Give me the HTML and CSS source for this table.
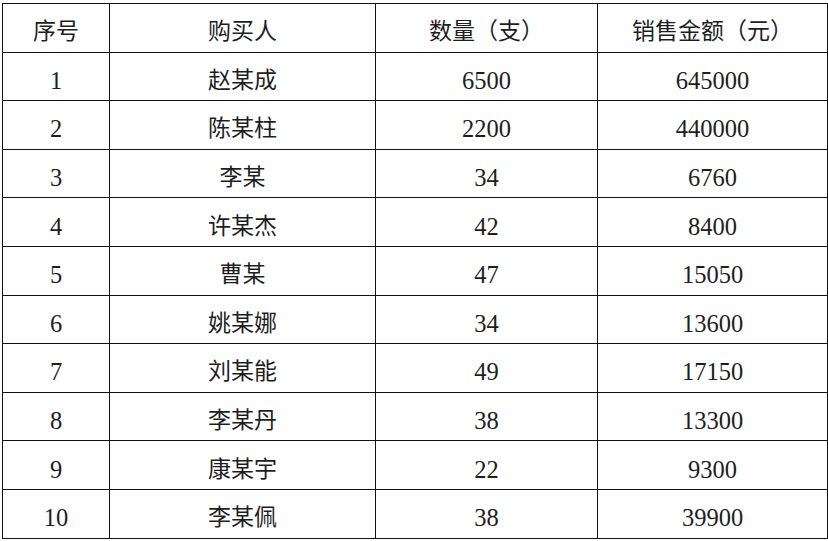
FILE: index.html
```html
<!DOCTYPE html>
<html lang="zh-CN">
<head>
<meta charset="utf-8">
<title>销售表</title>
<link rel="stylesheet" href="styles.css">
</head>
<body>
<table class="sales">
  <colgroup>
    <col class="c1"><col class="c2"><col class="c3"><col class="c4">
  </colgroup>
  <thead>
    <tr><th>序号</th><th>购买人</th><th>数量（支）</th><th>销售金额（元）</th></tr>
  </thead>
  <tbody>
    <tr><td class="num">1</td><td>赵某成</td><td class="num">6500</td><td class="num">645000</td></tr>
    <tr><td class="num">2</td><td>陈某柱</td><td class="num">2200</td><td class="num">440000</td></tr>
    <tr><td class="num">3</td><td>李某</td><td class="num">34</td><td class="num">6760</td></tr>
    <tr><td class="num">4</td><td>许某杰</td><td class="num">42</td><td class="num">8400</td></tr>
    <tr><td class="num">5</td><td>曹某</td><td class="num">47</td><td class="num">15050</td></tr>
    <tr><td class="num">6</td><td>姚某娜</td><td class="num">34</td><td class="num">13600</td></tr>
    <tr><td class="num">7</td><td>刘某能</td><td class="num">49</td><td class="num">17150</td></tr>
    <tr><td class="num">8</td><td>李某丹</td><td class="num">38</td><td class="num">13300</td></tr>
    <tr><td class="num">9</td><td>康某宇</td><td class="num">22</td><td class="num">9300</td></tr>
    <tr><td class="num">10</td><td>李某佩</td><td class="num">38</td><td class="num">39900</td></tr>
  </tbody>
</table>
</body>
</html>
```
FILE: styles.css
```css
html, body {
  margin: 0;
  padding: 0;
  background: #ffffff;
}
body {
  padding: 3px 0 0 2px;
}
.sales {
  border-collapse: collapse;
  table-layout: fixed;
  width: 825px;
  font-family: "Liberation Serif", "Noto Sans CJK SC", serif;
  font-size: 23px;
  color: #1e1e1e;
}
.c1 { width: 107px; }
.c2 { width: 266px; }
.c3 { width: 222px; }
.c4 { width: 230px; }
.sales th,
.sales td {
  border: 1.5px solid #111;
  height: 48.6px;
  box-sizing: border-box;
  padding: 9px 0 0 0;
  text-align: center;
  vertical-align: middle;
  font-weight: normal;
  line-height: 30px;
}
.sales .num {
  font-size: 24.5px;
}
```
